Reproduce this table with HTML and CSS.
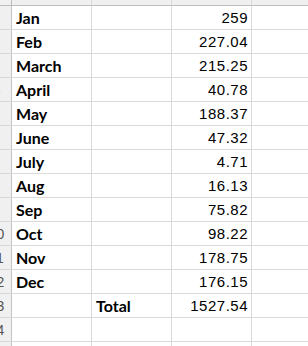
FILE: index.html
```
<!DOCTYPE html>
<html>
<head>
<meta charset="utf-8">
<link rel="stylesheet" href="styles.css">
</head>
<body>
<div class="sheet">
  <div class="corner"></div><div class="colhead"></div><div class="colhead"></div><div class="colhead"></div><div class="colhead last"></div>

  <div class="rh">1</div><div class="c label">Jan</div><div class="c"></div><div class="c num">259</div><div class="c last"></div>
  <div class="rh">2</div><div class="c label">Feb</div><div class="c"></div><div class="c num">227.04</div><div class="c last"></div>
  <div class="rh">3</div><div class="c label">March</div><div class="c"></div><div class="c num">215.25</div><div class="c last"></div>
  <div class="rh">4</div><div class="c label">April</div><div class="c"></div><div class="c num">40.78</div><div class="c last"></div>
  <div class="rh">5</div><div class="c label">May</div><div class="c"></div><div class="c num">188.37</div><div class="c last"></div>
  <div class="rh">6</div><div class="c label">June</div><div class="c"></div><div class="c num">47.32</div><div class="c last"></div>
  <div class="rh">7</div><div class="c label">July</div><div class="c"></div><div class="c num">4.71</div><div class="c last"></div>
  <div class="rh">8</div><div class="c label">Aug</div><div class="c"></div><div class="c num">16.13</div><div class="c last"></div>
  <div class="rh">9</div><div class="c label">Sep</div><div class="c"></div><div class="c num">75.82</div><div class="c last"></div>
  <div class="rh">10</div><div class="c label">Oct</div><div class="c"></div><div class="c num">98.22</div><div class="c last"></div>
  <div class="rh">11</div><div class="c label">Nov</div><div class="c"></div><div class="c num">178.75</div><div class="c last"></div>
  <div class="rh">12</div><div class="c label">Dec</div><div class="c"></div><div class="c num">176.15</div><div class="c last"></div>
  <div class="rh">13</div><div class="c"></div><div class="c label">Total</div><div class="c num">1527.54</div><div class="c last"></div>
  <div class="rh">14</div><div class="c"></div><div class="c"></div><div class="c"></div><div class="c last"></div>
  <div class="rh">15</div><div class="c"></div><div class="c"></div><div class="c"></div><div class="c last"></div>
</div>
</body>
</html>
```
FILE: styles.css
```
html, body {
  margin: 0;
  padding: 0;
  background: #ffffff;
  overflow: hidden;
}
.sheet {
  display: grid;
  grid-template-columns: 30px 80px 80px 80px 80px;
  grid-auto-rows: 24px;
  grid-template-rows: 6px;
  margin-left: -18px;
  width: 350px;
}
.corner, .colhead {
  background: #f0f0f0;
  border-bottom: 1px solid #bdbdbd;
  border-right: 1px solid #d8d8d8;
  box-sizing: border-box;
}
.corner {
  border-right: 1px solid #bdbdbd;
}
.rh {
  background: #f0f0f0;
  border-right: 1px solid #c4c4c4;
  border-bottom: 1px solid #d8d8d8;
  box-sizing: border-box;
  font-family: "Liberation Sans", Arial, sans-serif;
  font-size: 14px;
  color: #555555;
  text-align: center;
  line-height: 23px;
  padding-top: 1px;
}
.c {
  border-right: 1px solid #dadada;
  border-bottom: 1px solid #dadada;
  box-sizing: border-box;
  display: flex;
  align-items: flex-end;
  padding: 0 3px 1px 4px;
  color: #000000;
  white-space: nowrap;
}
.label {
  font-family: Lato, "Open Sans", sans-serif;
  font-weight: 700;
  font-size: 16px;
  line-height: 21px;
}
.num {
  justify-content: flex-end;
  font-family: "Liberation Sans", Arial, sans-serif;
  font-size: 15px;
  letter-spacing: 0.5px;
  line-height: 21px;
}
```
